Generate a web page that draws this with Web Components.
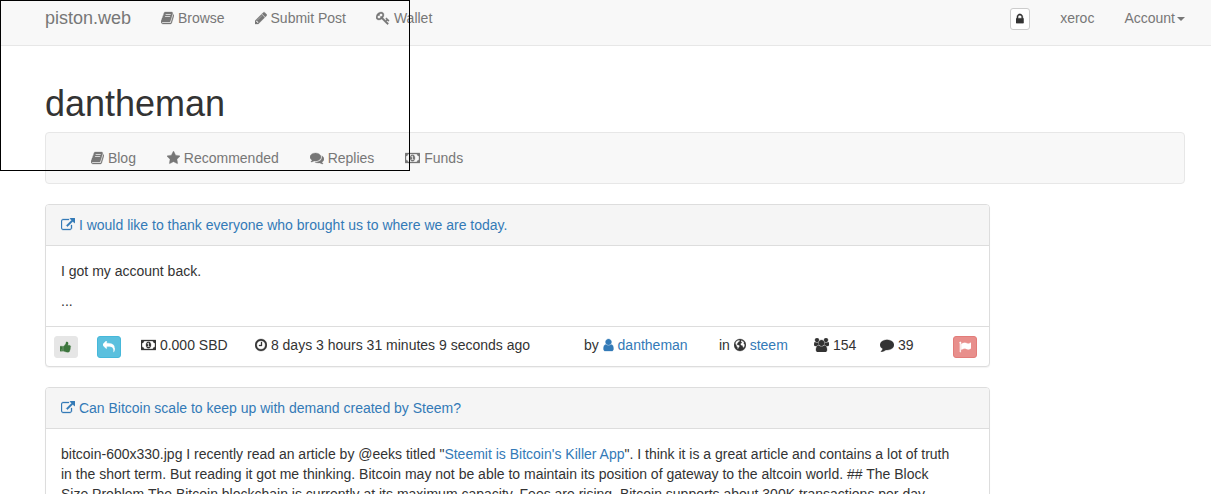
<!DOCTYPE html>
<html lang="en">
<head>
<meta charset="utf-8">
<title>piston.web</title>
<style>
html { scrollbar-width: none; }
body { margin: 0; background: #fff; color: #333; font: 14px/20px "Liberation Sans", Arial, sans-serif; }
</style>
</head>
<body>
<piston-page></piston-page>
<script>
const ICONS = {
  book: [64, 1664, "M1703 478q40 57 18 129l-275 906q-19 64-76.5 107.5t-122.5 43.5h-923q-77 0-148.5-53.5t-99.5-131.5q-24-67-2-127 0-4 3-27t4-37q1-8-3-21.5t-3-19.5q2-11 8-21t16.5-23.5 16.5-23.5q23-38 45-91.5t30-91.5q3-10 .5-30t-.5-28q3-11 17-28t17-23q21-36 42-92t25-90q1-9-2.5-32t.5-28q4-13 22-30.5t22-22.5q19-26 42.5-84.5t27.5-96.5q1-8-3-25.5t-2-26.5q2-8 9-18t18-23 17-21q8-12 16.5-30.5t15-35 16-36 19.5-32 26.5-23.5 36-11.5 47.5 5.5l-1 3q38-9 51-9h761q74 0 114 56t18 130l-274 906q-36 119-71.5 153.5t-128.5 34.5h-869q-27 0-38 15-11 16-1 43 24 70 144 70h923q29 0 56-15.5t35-41.5l300-987q7-22 5-57 38 15 59 43zm-1064 2q-4 13 2 22.5t20 9.5h608q13 0 25.5-9.5t16.5-22.5l21-64q4-13-2-22.5t-20-9.5h-608q-13 0-25.5 9.5t-16.5 22.5zm-83 256q-4 13 2 22.5t20 9.5h608q13 0 25.5-9.5t16.5-22.5l21-64q4-13-2-22.5t-20-9.5h-608q-13 0-25.5 9.5t-16.5 22.5z"],
  pencil: [128, 1536, "M491 1536l91-91-235-235-91 91v107h128v128h107zm523-928q0-22-22-22-10 0-17 7l-542 542q-7 7-7 17 0 22 22 22 10 0 17-7l542-542q7-7 7-17zm-54-192l416 416-832 832h-416v-416zm683 96q0 53-37 90l-166 166-416-416 166-165q36-38 90-38 53 0 91 38l235 234q37 39 37 91z"],
  key: [0, 1792, "M832 512q0-80-56-136t-136-56-136 56-56 136q0 42 19 83-41-19-83-19-80 0-136 56t-56 136 56 136 136 56 136-56 56-136q0-42-19-83 41 19 83 19 80 0 136-56t56-136zm851 704q0 17-49 66t-66 49q-9 0-28.5-16t-36.5-33-38.5-40-24.5-26l-96 96 220 220q28 28 28 68 0 42-39 81t-81 39q-40 0-68-28l-671-671q-176 131-365 131-163 0-265.5-102.5t-102.5-265.5q0-160 95-313t248-248 313-95q163 0 265.5 102.5t102.5 265.5q0 189-131 365l355 355 96-96q-3-3-26-24.5t-40-38.5-33-36.5-16-28.5q0-17 49-66t66-49q13 0 23 10 6 6 46 44.5t82 79.5 86.5 86 73 78 28.5 41z"],
  lock: [320, 1152, "M640 768h512v-192q0-106-75-181t-181-75-181 75-75 181v192zm832 96v576q0 40-28 68t-68 28h-960q-40 0-68-28t-28-68v-576q0-40 28-68t68-28h32v-192q0-184 132-316t316-132 316 132 132 316v192h32q40 0 68 28t28 68z"],
  star: [64, 1664, "M1728 647q0 22-26 48l-363 354 86 500q1 7 1 20 0 21-10.5 35.5t-30.5 14.5q-19 0-40-12l-449-236-449 236q-22 12-40 12-21 0-31.5-14.5t-10.5-35.5q0-6 2-20l86-500-364-354q-25-27-25-48 0-37 56-46l502-73 225-455q19-41 49-41t49 41l225 455 502 73q56 9 56 46z"],
  comments: [0, 1792, "M1408 768q0 139-94 257t-256.5 186.5-353.5 68.5q-86 0-176-16-124 88-278 128-36 9-86 16h-3q-11 0-20.5-8t-11.5-21q-1-3-1-6.5t.5-6.5 2-6l2.5-5 3.5-5.5 4-5 4.5-5 4-4.5q5-6 23-25t26-29.5 22.5-29 25-38.5 20.5-44q-124-72-195-177t-71-224q0-139 94-257t256.5-186.5 353.5-68.5 353.5 68.5 256.5 186.5 94 257zm384 256q0 120-71 224.5t-195 176.5q10 24 20.5 44t25 38.5 22.5 29 26 29.5 23 25q1 1 4 4.5t4.5 5 4 5 3.5 5.5l2.5 5 2 6 .5 6.5-1 6.5q-3 14-13 22t-22 7q-50-7-86-16-154-40-278-128-90 16-176 16-271 0-472-132 58 4 88 4 161 0 309-45t264-129q125-92 192-212t67-254q0-77-23-152 129 71 204 178t75 230z"],
  money: [0, 1920, "M768 1152h384v-96h-128v-448h-114l-148 137 77 80q42-37 55-57h2v288h-128v96zm512-256q0 70-21 142t-59.5 134-101.5 101-138 39-138-39-101.5-101-59.5-134-21-142 21-142 59.5-134 101.5-101 138-39 138 39 101.5 101 59.5 134 21 142zm512 256v-512q-106 0-181-75t-75-181h-1152q0 106-75 181t-181 75v512q106 0 181 75t75 181h1152q0-106 75-181t181-75zm128-832v1152q0 26-19 45t-45 19h-1792q-26 0-45-19t-19-45v-1152q0-26 19-45t45-19h1792q26 0 45 19t19 45z"],
  external: [0, 1792, "M1408 928v320q0 119-84.5 203.5t-203.5 84.5h-832q-119 0-203.5-84.5t-84.5-203.5v-832q0-119 84.5-203.5t203.5-84.5h704q14 0 23 9t9 23v64q0 14-9 23t-23 9h-704q-66 0-113 47t-47 113v832q0 66 47 113t113 47h832q66 0 113-47t47-113v-320q0-14 9-23t23-9h64q14 0 23 9t9 23zm384-864v512q0 26-19 45t-45 19-45-19l-176-176-652 652q-10 10-23 10t-23-10l-114-114q-10-10-10-23t10-23l652-652-176-176q-19-19-19-45t19-45 45-19h512q26 0 45 19t19 45z"],
  thumb: [64, 1664, "M320 1344q0-26-19-45t-45-19q-27 0-45.5 19t-18.5 45q0 27 18.5 45.5t45.5 18.5q26 0 45-18.5t19-45.5zm160-512v640q0 26-19 45t-45 19h-288q-26 0-45-19t-19-45v-640q0-26 19-45t45-19h288q26 0 45 19t19 45zm1184 0q0 86-55 149 15 44 15 76 3 76-43 137 17 56 0 117-15 57-54 94 9 112-49 181-64 76-197 78h-129q-66 0-144-15.5t-121.5-29-120.5-39.5q-123-43-158-44-26-1-45-19.5t-19-44.5v-641q0-25 18-43.5t43-20.5q24-2 76-59t101-121q68-87 101-120 18-18 31-48t17.5-48.5 13.5-60.5q7-39 12.5-61t19.5-52 34-50q19-19 45-19 46 0 82.5 10.5t60 26 40 40.5 24 45 12 50 5 45 .5 39q0 38-9.5 76t-19 60-27.5 56q-3 6-10 18t-11 22-8 24h277q78 0 135 57t57 135z"],
  reply: [0, 1792, "M1792 1120q0 166-127 451-3 7-10.5 24t-13.5 30-13 22q-12 17-28 17-15 0-23.5-10t-8.5-25q0-9 2.5-26.5t2.5-23.5q5-68 5-123 0-112-19.5-200.5t-54-153.5-89-112-118-78.5-148-49.5-172-24.5-197.5-6.5h-224v256q0 26-19 45t-45 19-45-19l-512-512q-19-19-19-45t19-45l512-512q19-19 45-19t45 19 19 45v256h224q713 0 875 403 53 134 53 333z"],
  clock: [128, 1536, "M1024 544v448q0 14-9 23t-23 9h-320q-14 0-23-9t-9-23v-64q0-14 9-23t23-9h224v-352q0-14 9-23t23-9h64q14 0 23 9t9 23zm416 352q0-148-73-273t-198-198-273-73-273 73-198 198-73 273 73 273 198 198 273 73 273-73 198-198 73-273zm224 0q0 209-103 385.5t-279.5 279.5-385.5 103-385.5-103-279.5-279.5-103-385.5 103-385.5 279.5-279.5 385.5-103 385.5 103 279.5 279.5 103 385.5z"],
  user: [192, 1408, "M1536 1399q0 109-62.5 187t-150.5 78h-854q-88 0-150.5-78t-62.5-187q0-85 8.5-160.5t31.5-152 58.5-131 94-89 134.5-34.5q131 128 313 128t313-128q76 0 134.5 34.5t94 89 58.5 131 31.5 152 8.5 160.5zm-256-887q0 159-112.5 271.5t-271.5 112.5-271.5-112.5-112.5-271.5 112.5-271.5 271.5-112.5 271.5 112.5 112.5 271.5z"],
  globe: [128, 1536, "M896 128a768 768 0 1 0 0 1536a768 768 0 1 0 0-1536zM330 500L560 330L760 270L900 330L840 440L700 500L640 640L540 720L500 820L640 860L800 930L850 1040L780 1180L690 1270L640 1440L560 1380L560 1160L440 1040L420 900L300 780zM1100 300L1300 430L1440 620L1380 700L1480 800L1500 960L1420 1180L1320 1260L1240 1140L1220 1000L1060 960L960 840L1000 680L1140 600L1060 520L1000 420z"],
  users: [64, 1920, "M657 896q-162 5-265 128h-134q-82 0-138-40.5t-56-118.5q0-353 124-353 6 0 43.5 21t97.5 42.5 119 21.5q67 0 133-23-5 37-5 66 0 159 90 256zm1071 637q0 120-73 189.5t-194 69.5h-874q-121 0-194-69.5t-73-189.5q0-53 3.5-103.5t14-109 26.5-108.5 43-97.5 62-81 85.5-53.5 111.5-20q10 0 43 21.5t73 48 107 48 135 21.5 135-21.5 107-48 73-48 43-21.5q61 0 111.5 20t85.5 53.5 62 81 43 97.5 26.5 108.5 14 109 3.5 103.5zm-1024-1277q0 106-75 181t-181 75-181-75-75-181 75-181 181-75 181 75 75 181zm704 384q0 159-112.5 271.5t-271.5 112.5-271.5-112.5-112.5-271.5 112.5-271.5 271.5-112.5 271.5 112.5 112.5 271.5zm576 225q0 78-56 118.5t-138 40.5h-134q-103-123-265-128 90-97 90-256 0-29-5-66 66 23 133 23 59 0 119-21.5t97.5-42.5 43.5-21q124 0 124 353zm-128-609q0 106-75 181t-181 75-181-75-75-181 75-181 181-75 181 75 75 181z"],
  comment: [0, 1792, "M1792 896q0 174-120 321.5t-326 233-450 85.5q-70 0-145-8-198 175-460 225-49 14-114 22-17 2-30.5-9t-17.5-29v-1q-3-4-.5-12t2-10 4.5-9.5l6-9 7-8.5 8-9q7-8 31-34.5t34.5-38 31-39.5 32.5-51 27-59 26-76q-157-89-247.5-220t-90.5-281q0-130 71-248.5t191-204.5 286-136.5 348-50.5 348 50.5 286 136.5 191 204.5 71 248.5z"],
  flag: [0, 1792, "M320 256q0 72-64 110v1266q0 13-9.5 22.5t-22.5 9.5h-64q-13 0-22.5-9.5t-9.5-22.5v-1266q-64-38-64-110 0-53 37.5-90.5t90.5-37.5 90.5 37.5 37.5 90.5zm1472 64v763q0 25-12.5 38.5t-39.5 27.5q-215 116-369 116-61 0-123.5-22t-108.5-48-115.5-48-142.5-22q-192 0-464 146-17 9-33 9-26 0-45-19t-19-45v-742q0-32 31-55 21-14 79-43 236-120 421-120 107 0 200 29t219 88q38 19 88 19 54 0 117.5-21t110-47 88-47 54.5-21q26 0 45 19t19 45z"]
};

function define(name, html) {
  const template = document.createElement("template");
  template.innerHTML = html;
  customElements.define(name, class extends HTMLElement {
    constructor() {
      super();
      this.attachShadow({ mode: "open" }).append(template.content.cloneNode(true));
    }
  });
}

customElements.define("p-icon", class extends HTMLElement {
  connectedCallback() {
    if (this.shadowRoot) return;
    const [x, w, d] = ICONS[this.getAttribute("name")];
    this.attachShadow({ mode: "open" }).innerHTML = `
      <style>:host{display:inline-block;line-height:1;vertical-align:-2px} svg{display:block;height:1em;fill:currentColor;stroke:currentColor;stroke-width:40}</style>
      <svg viewBox="${x} 0 ${w} 1792" aria-hidden="true"><path fill-rule="evenodd" d="${d}"/></svg>`;
  }
});

/* Navigation entry: icon plus label */
customElements.define("nav-item", class extends HTMLElement {
  connectedCallback() {
    if (this.shadowRoot) return;
    const icon = this.getAttribute("icon");
    this.attachShadow({ mode: "open" }).innerHTML = `
      <style>:host{display:block} a{display:block;color:#777;text-decoration:none;white-space:nowrap}
      .caret{display:inline-block;vertical-align:middle;border:4px solid transparent;border-top-color:currentColor;border-bottom:0;margin-left:2px}</style>
      <a href="#">${icon ? `<p-icon name="${icon}"></p-icon> ` : ""}<slot></slot>${this.hasAttribute("menu") ? '<span class="caret"></span>' : ""}</a>`;
  }
});

/* Small square button; kind selects the colours */
customElements.define("icon-button", class extends HTMLElement {
  connectedCallback() {
    if (this.shadowRoot) return;
    this.attachShadow({ mode: "open" }).innerHTML = `
      <style>:host{display:block}
      button{display:flex;align-items:center;justify-content:center;box-sizing:border-box;width:24px;height:22px;margin:0;padding:0;font:12px/18px "Liberation Sans",Arial,sans-serif;border:1px solid #ccc;border-radius:3px;background:#fff;color:#333}
      :host([kind=vote]) button{background:#e6e6e6;border-color:#e6e6e6;color:#3c763d}
      :host([kind=reply]) button{background:#5bc0de;border-color:#46b8da;color:#fff}
      :host([kind=flag]) button{background:#e88f8c;border-color:#e27c79;color:#fff}
      :host([kind=lock]) button{width:20px}</style>
      <button type="button" aria-label="${this.getAttribute("label")}"><p-icon name="${this.getAttribute("icon")}"></p-icon></button>`;
  }
});

define("top-bar", `
  <style>
  :host{display:block;background:#f8f8f8;border-bottom:1px solid #e7e7e7}
  nav{display:flex;align-items:flex-start;height:37px;padding:8px 26px 0 45px}
  .brand{color:#777;font-size:18px;text-decoration:none;margin-right:30px}
  .left,.right{display:flex;gap:30px}
  .right{margin-left:auto}
  </style>
  <nav aria-label="Main">
    <a class="brand" href="#">piston.web</a>
    <div class="left"><nav-item icon="book">Browse</nav-item><nav-item icon="pencil">Submit Post</nav-item><nav-item icon="key">Wallet</nav-item></div>
    <div class="right"><icon-button kind="lock" icon="lock" label="Lock"></icon-button><nav-item>xeroc</nav-item><nav-item menu>Account</nav-item></div>
  </nav>`);

define("sub-nav", `
  <style>
  :host{display:block;margin-bottom:20px}
  nav{display:flex;gap:31px;padding:15px 45px;border:1px solid #e7e7e7;border-radius:4px;background:#f8f8f8}
  </style>
  <nav aria-label="Profile"><nav-item icon="book">Blog</nav-item><nav-item icon="star">Recommended</nav-item><nav-item icon="comments">Replies</nav-item><nav-item icon="money">Funds</nav-item></nav>`);

define("post-stats", `
  <style>
  :host{display:block;border-top:1px solid #ddd}
  .row{display:grid;grid-template-columns:43px 44px 114px 329px 135px 95px 66px 1fr 24px;padding:8px 12px 9px 8px;white-space:nowrap}
  icon-button{margin-top:1px;height:21px}
  a{color:#337ab7;text-decoration:none}
  </style>
  <div class="row">
    <icon-button kind="vote" icon="thumb" label="Vote up"></icon-button>
    <icon-button kind="reply" icon="reply" label="Reply"></icon-button>
    <span><p-icon name="money"></p-icon> <slot name="value"></slot></span>
    <span><p-icon name="clock"></p-icon> <slot name="age"></slot></span>
    <span>by <a href="#"><p-icon name="user"></p-icon> <slot name="author"></slot></a></span>
    <span>in <p-icon name="globe"></p-icon> <a href="#"><slot name="topic"></slot></a></span>
    <span><p-icon name="users"></p-icon> <slot name="votes"></slot></span>
    <span><p-icon name="comment"></p-icon> <slot name="comments"></slot></span>
    <icon-button kind="flag" icon="flag" label="Flag"></icon-button>
  </div>`);

define("post-card", `
  <style>
  :host{display:block;margin-bottom:20px;border:1px solid #ddd;border-radius:4px;box-shadow:0 1px 1px rgba(0,0,0,.05);background:#fff}
  header{padding:10px 15px;border-bottom:1px solid #ddd;border-radius:3px 3px 0 0;background:#f5f5f5}
  header a{color:#337ab7;text-decoration:none}
  .body{display:grid;gap:10px;padding:15px}
  ::slotted(p){margin:0}
  </style>
  <header><a href="#"><p-icon name="external"></p-icon> <slot name="title"></slot></a></header>
  <div class="body"><slot></slot></div>
  <slot name="footer"></slot>`);

define("selection-frame", `
  <style>:host{position:absolute;top:0;left:0;box-sizing:border-box;width:410px;height:171px;border:1px solid #000;pointer-events:none}</style>`);

define("piston-page", `
  <style>
  :host{display:block;position:relative}
  main{padding:38px 26px 0 45px}
  h1{margin:0 0 8px;font-size:36px;line-height:40px;font-weight:400}
  .posts{margin-right:195px}
  p a{color:#337ab7;text-decoration:none}
  </style>
  <top-bar></top-bar>
  <main>
    <h1>dantheman</h1>
    <sub-nav></sub-nav>
    <div class="posts">
      <post-card>
        <span slot="title">I would like to thank everyone who brought us to where we are today.</span>
        <p>I got my account back.</p>
        <p>...</p>
        <post-stats slot="footer">
          <span slot="value">0.000 SBD</span><span slot="age">8 days 3 hours 31 minutes 9 seconds ago</span><span slot="author">dantheman</span><span slot="topic">steem</span><span slot="votes">154</span><span slot="comments">39</span>
        </post-stats>
      </post-card>
      <post-card>
        <span slot="title">Can Bitcoin scale to keep up with demand created by Steem?</span>
        <p>bitcoin-600x330.jpg I recently read an article by @eeks titled "<a href="#">Steemit is Bitcoin's Killer App</a>". I think it is a great article and contains a lot of truth<br>in the short term. But reading it got me thinking. Bitcoin may not be able to maintain its position of gateway to the altcoin world. ## The Block<br>Size Problem The Bitcoin blockchain is currently at its maximum capacity. Fees are rising. Bitcoin supports about 300K transactions per day.</p>
      </post-card>
    </div>
  </main>
  <selection-frame></selection-frame>`);
</script>
</body>
</html>
